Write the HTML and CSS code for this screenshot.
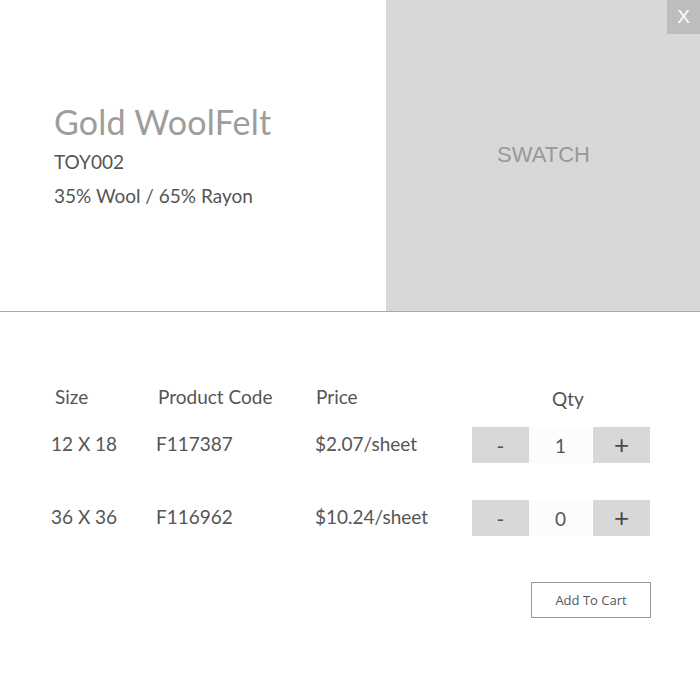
FILE: index.html
```html
<!DOCTYPE html>
<html>
<head>
<meta charset="utf-8">
<link rel="stylesheet" href="styles.css">
</head>
<body>
<div class="modal">
  <div class="top">
    <div class="info">
      <h1 class="title">Gold WoolFelt</h1>
      <div class="sku">TOY002</div>
      <div class="blend">35% Wool / 65% Rayon</div>
    </div>
    <div class="swatch">SWATCH</div>
  </div>
  <button class="close">X</button>
  <div class="table">
    <div class="row head">
      <div class="c-size">Size</div>
      <div class="c-code">Product Code</div>
      <div class="c-price">Price</div>
      <div class="c-qty">Qty</div>
    </div>
    <div class="row item first">
      <div class="c-size">12 X 18</div>
      <div class="c-code">F117387</div>
      <div class="c-price">$2.07/sheet</div>
      <div class="c-qty stepper"><span class="btn">-</span><span class="val">1</span><span class="btn plus">+</span></div>
    </div>
    <div class="row item second">
      <div class="c-size">36 X 36</div>
      <div class="c-code">F116962</div>
      <div class="c-price">$10.24/sheet</div>
      <div class="c-qty stepper"><span class="btn">-</span><span class="val">0</span><span class="btn plus">+</span></div>
    </div>
    <div class="footer">
      <button class="cart">Add To Cart</button>
    </div>
  </div>
</div>
</body>
</html>
```
FILE: styles.css
```css
* { box-sizing: border-box; }
html, body { margin: 0; padding: 0; background: #fff; }
body { width: 700px; height: 686px; overflow: hidden; font-family: Lato, "Noto Sans", sans-serif; color: #555; }
.modal { position: relative; width: 700px; height: 686px; }
.top { display: flex; height: 312px; border-bottom: 1px solid #a9a9a9; }
.info { width: 386px; padding: 101px 0 0 54px; }
.title { margin: 0; font-weight: 400; font-size: 34px; line-height: 42px; color: #9d9d9d; letter-spacing: 0.2px; }
.sku { font-size: 19px; line-height: 28px; margin-top: 5px; color: #555; }
.blend { font-size: 19px; line-height: 28px; margin-top: 6px; color: #555; }
.swatch { flex: 1; background: #d8d8d8; display: flex; align-items: center; justify-content: center; font-family: "Liberation Sans", Arial, sans-serif; font-size: 22px; color: #999; padding-bottom: 2px; padding-left: 1px; }
.close { position: absolute; top: 0; right: 0; width: 33px; height: 34px; border: 0; background: #bdbdbd; color: #fff; font-family: "Liberation Sans", Arial, sans-serif; font-size: 19px; padding: 0; }
.table { padding: 66px 0 0 51px; }
.row { display: grid; grid-template-columns: 105px 159px 157px 178px; align-items: center; font-size: 19px; }
.head { height: 36px; }
.head .c-size { padding-left: 4px; }
.head .c-code { padding-left: 2px; }
.head .c-price { padding-left: 1px; }
.head .c-qty { text-align: center; padding-left: 14px; padding-top: 5px; }
.item { height: 36px; }
.item > div:not(.stepper) { padding-bottom: 3px; }
.first { margin-top: 13px; }
.second { margin-top: 37px; }
.stepper { display: flex; height: 36px; }
.stepper .btn { width: 57px; background: #d8d8d8; display: flex; align-items: center; justify-content: center; font-size: 21px; color: #555; }
.stepper .plus { margin-left: 1px; font-family: "Liberation Sans", Arial, sans-serif; font-size: 26px; color: #4a4a4a; }
.stepper .val { width: 63px; background: #fdfcfc; display: flex; align-items: center; justify-content: center; }
.footer { display: flex; justify-content: flex-end; width: 600px; margin-top: 46px; }
.cart { width: 120px; height: 36px; border: 1px solid #999; background: #fff; color: #555; font-family: "Open Sans", sans-serif; font-size: 13px; padding: 0; }
```
